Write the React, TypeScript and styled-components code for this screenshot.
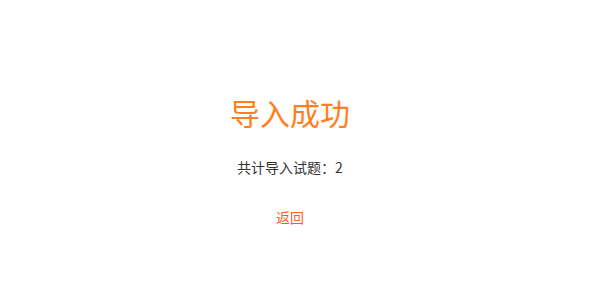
import styled, { createGlobalStyle } from "styled-components";

const GlobalStyle = createGlobalStyle`
  html, body {
    margin: 0;
    padding: 0;
    background: #ffffff;
  }
  body {
    font-family: "Noto Sans CJK SC", "Liberation Sans", sans-serif;
  }
`;

const Page = styled.div`
  width: 580px;
  height: 304px;
  display: flex;
  flex-direction: column;
  align-items: center;
  padding-top: 91px;
  box-sizing: border-box;
`;

const Title = styled.h1`
  margin: 0;
  font-size: 30px;
  line-height: 42px;
  font-weight: 400;
  color: #ff7f1e;
`;

const Summary = styled.p`
  margin: 24px 0 0;
  font-size: 14px;
  line-height: 20px;
  color: #333333;
`;

const BackLink = styled.a`
  margin-top: 31px;
  font-size: 14px;
  line-height: 18px;
  color: #ff5a1f;
  text-decoration: none;
  cursor: pointer;
`;

function App() {
  return (
    <>
      <GlobalStyle />
      <Page>
        <Title>导入成功</Title>
        <Summary>共计导入试题：2</Summary>
        <BackLink>返回</BackLink>
      </Page>
    </>
  );
}

export default App;
